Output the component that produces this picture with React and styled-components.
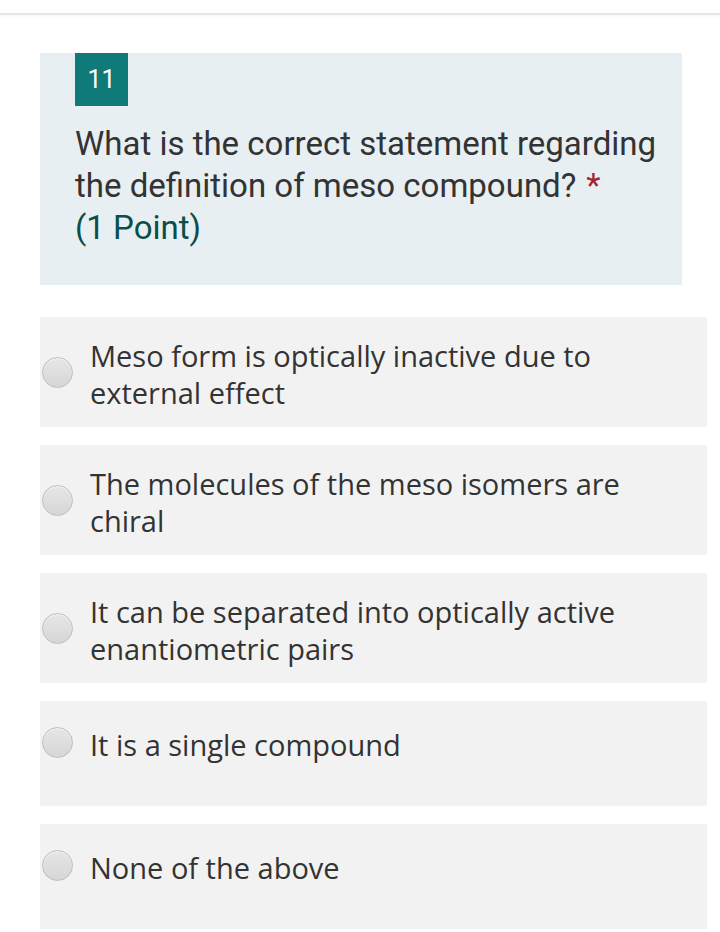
import React from 'react';
import styled, { createGlobalStyle } from 'styled-components';

const GlobalStyle = createGlobalStyle`
  html, body {
    margin: 0;
    padding: 0;
    background: #ffffff;
  }
`;

const TopBar = styled.div`
  height: 13px;
  border-bottom: 2px solid #e6e6e6;
  box-shadow: 0 2px 4px rgba(0, 0, 0, 0.03);
`;

const Page = styled.div`
  padding: 38px 13px 0 40px;
`;

const QuestionCard = styled.div`
  background: #e7eff2;
  margin-right: 25px;
  padding: 0 24px 36px 35px;
`;

const Badge = styled.div`
  width: 53px;
  height: 53px;
  background: #0f7a78;
  color: #ffffff;
  font-family: Roboto, "Liberation Sans", sans-serif;
  font-size: 25px;
  display: flex;
  align-items: center;
  justify-content: center;
`;

const Title = styled.div`
  margin-top: 17px;
  font-family: Roboto, "Liberation Sans", sans-serif;
  font-size: 33px;
  line-height: 42px;
  color: #333333;
`;

const Star = styled.span`
  color: #a4262c;
  margin-left: 10px;
`;

const Points = styled.div`
  color: #0b4f4c;
`;

const Options = styled.div`
  margin-top: 32px;
  display: flex;
  flex-direction: column;
  gap: 18px;
`;

const Choice = styled.label`
  display: block;
  box-sizing: border-box;
  min-height: 105px;
  background: #f2f2f2;
  padding: 20px 20px 16px 2px;
`;

const ChoiceRow = styled.div`
  display: flex;
  align-items: center;
  gap: 17px;
  min-height: 47px;
`;

const Radio = styled.span`
  flex: none;
  box-sizing: border-box;
  width: 31px;
  height: 31px;
  border-radius: 50%;
  border: 1px solid #bdbdbd;
  background: linear-gradient(#e6e6e6, #d6d6d6);
  box-shadow: inset 0 1px 1px rgba(255, 255, 255, 0.7);
  transform: translateY(-2px);
`;

const ChoiceText = styled.span`
  font-family: "Open Sans", "Noto Sans", sans-serif;
  font-size: 29px;
  line-height: 37px;
  color: #333333;
`;

const choices = [
  'Meso form is optically inactive due to external effect',
  'The molecules of the meso isomers are chiral',
  'It can be separated into optically active enantiometric pairs',
  'It is a single compound',
  'None of the above',
];

export default function App() {
  return (
    <>
      <GlobalStyle />
      <TopBar />
      <Page>
        <QuestionCard>
          <Badge>11</Badge>
          <Title>
            What is the correct statement regarding the definition of meso compound?
            <Star>*</Star>
            <Points>(1 Point)</Points>
          </Title>
        </QuestionCard>
        <Options>
          {choices.map((c) => (
            <Choice key={c}>
              <ChoiceRow>
                <Radio />
                <ChoiceText>{c}</ChoiceText>
              </ChoiceRow>
            </Choice>
          ))}
        </Options>
      </Page>
    </>
  );
}
